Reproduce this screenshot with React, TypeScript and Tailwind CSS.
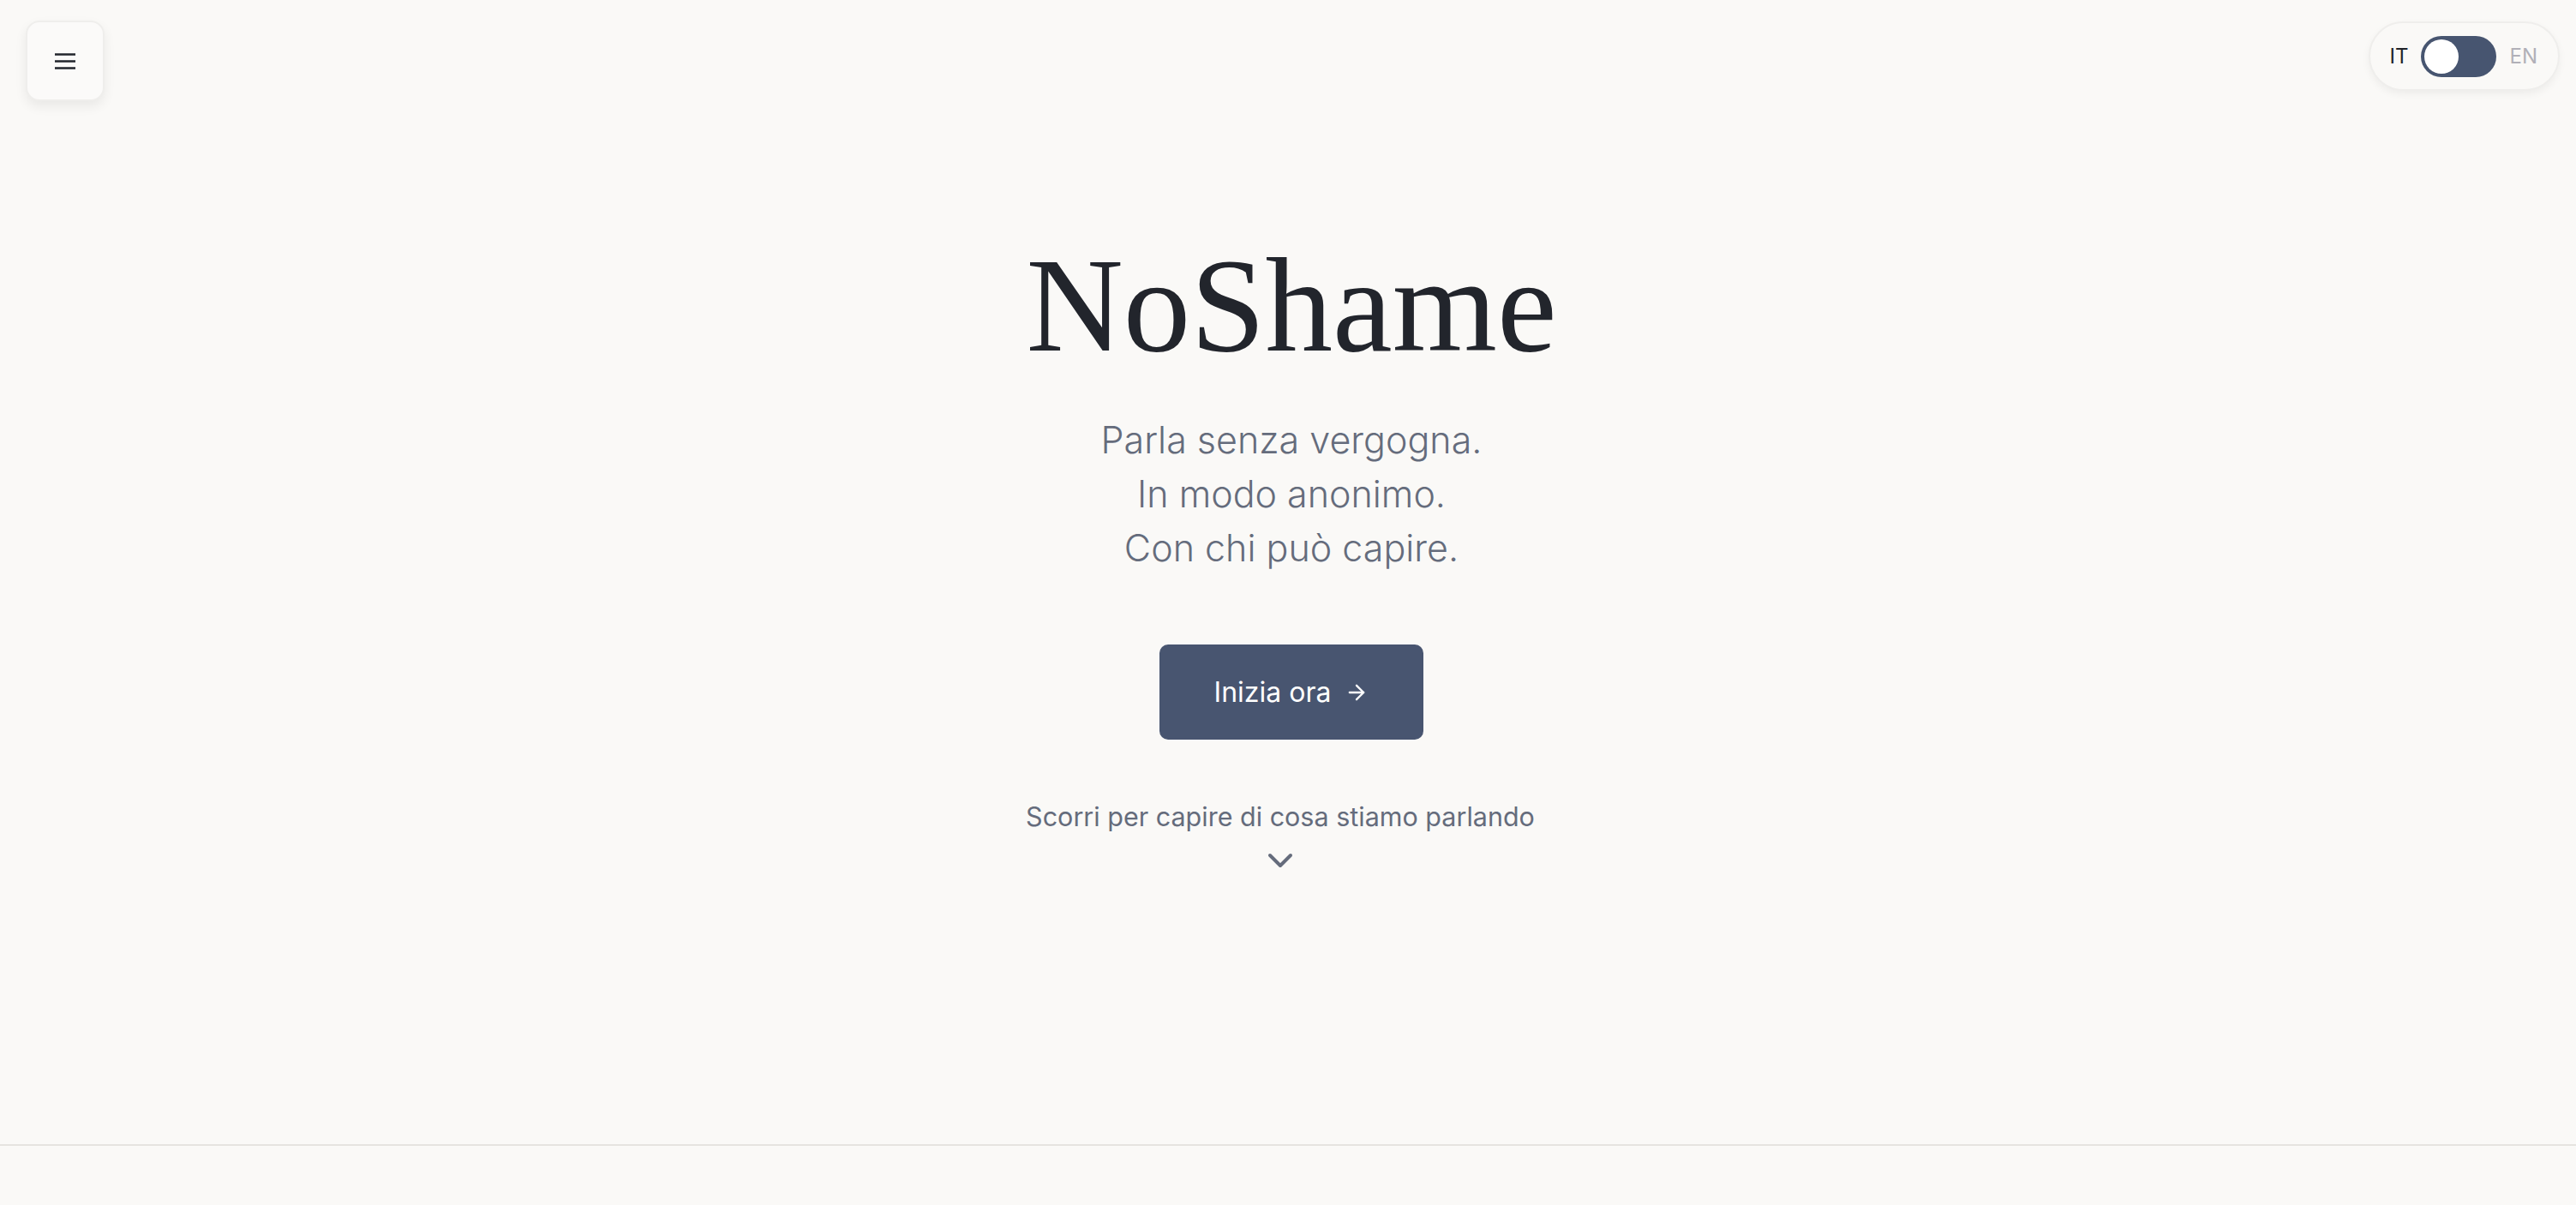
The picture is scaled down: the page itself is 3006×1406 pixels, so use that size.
import { useState } from "react";

export default function App() {
  const [lang, setLang] = useState<"it" | "en">("it");

  return (
    <div className="min-h-screen w-full bg-[#faf9f7] font-['Inter',sans-serif] text-[#22252c]">
      {/* Hero */}
      <section className="h-[1337px] flex flex-col border-b-2 border-[#e6e4e0]">
        <header className="flex items-start justify-between pl-[30px] pr-[19px] pt-[24px]">
          <button
            aria-label="Menu"
            className="w-[92px] h-[94px] flex items-center justify-center rounded-[16px] bg-[#fbfaf9] border-2 border-[#efeeec] shadow-[0_6px_14px_rgba(0,0,0,0.07)]"
          >
            <svg width="24" height="19" viewBox="0 0 24 19" fill="none">
              <path d="M0 1.5h24M0 9.5h24M0 17.5h24" stroke="#22252c" strokeWidth="2.6" />
            </svg>
          </button>

          <div className="mt-px h-[81px] flex items-center gap-[15px] pl-[23px] pr-[24px] rounded-full bg-[#faf9f7] border-2 border-[#efeeec] shadow-[0_4px_10px_rgba(0,0,0,0.05)]">
            <span className={`text-[24px] leading-none ${lang === "it" ? "text-[#1f2228]" : "text-[#b1b0b8]"}`}>IT</span>
            <button
              aria-label="Lingua"
              onClick={() => setLang(lang === "it" ? "en" : "it")}
              className={`w-[88px] h-[48px] rounded-full bg-[#475570] p-[4px] flex ${lang === "it" ? "justify-start" : "justify-end"}`}
            >
              <span className="w-[40px] h-[40px] rounded-full bg-white" />
            </button>
            <span className={`text-[24px] leading-none ${lang === "en" ? "text-[#1f2228]" : "text-[#b1b0b8]"}`}>EN</span>
          </div>
        </header>

        <main className="flex flex-col items-center pl-[8px]">
          <h1 className="mt-[160px] font-['Liberation_Serif',serif] text-[157px] leading-[157px] font-normal text-[#22252c]">
            NoShame
          </h1>

          <p className="mt-[47px] text-center text-[43px] leading-[63px] font-light text-[#656c7c]">
            Parla senza vergogna.
            <br />
            In modo anonimo.
            <br />
            Con chi può capire.
          </p>

          <button className="mt-[81px] h-[111px] px-16 flex items-center gap-[16px] rounded-[10px] bg-[#485570] text-white text-[32px] leading-none">
            <span>Inizia ora</span>
            <svg width="28" height="28" viewBox="0 0 24 24" fill="none" stroke="currentColor" strokeWidth="2" strokeLinecap="round" strokeLinejoin="round">
              <path d="M5 12h14" />
              <path d="m12 5 7 7-7 7" />
            </svg>
          </button>

          <div className="mt-[70px] pr-[26px] flex flex-col items-center text-[#656c7c]">
            <span className="text-[30.5px] leading-[40px]">Scorri per capire di cosa stiamo parlando</span>
            <svg className="mt-[22px]" width="30" height="18" viewBox="0 0 30 18" fill="none">
              <path d="M3 3l12 12 12-12" stroke="currentColor" strokeWidth="4" strokeLinecap="round" strokeLinejoin="round" />
            </svg>
          </div>
        </main>
      </section>

      <section className="h-[67px]" />
    </div>
  );
}
